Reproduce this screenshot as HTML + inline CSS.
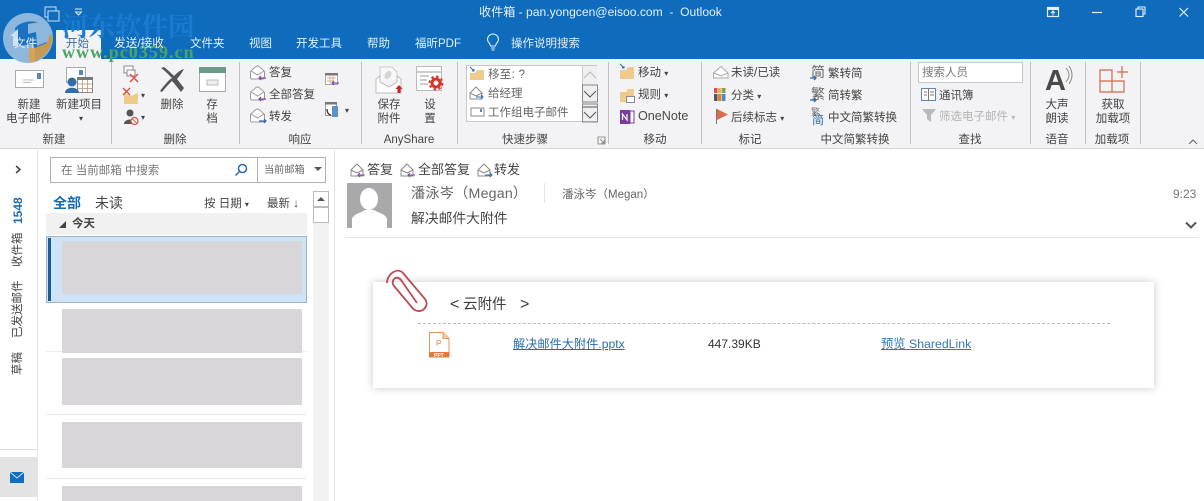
<!DOCTYPE html>
<html><head><meta charset="utf-8">
<style>
html,body{margin:0;padding:0;background:#fff}
#p{position:relative;width:1204px;height:501px;overflow:hidden;background:#fff;font-family:"Liberation Sans","Noto Sans CJK SC",sans-serif;color:#444}
.t{position:absolute;white-space:nowrap;font-size:11.500px;line-height:16px;color:#444}
.c{text-align:center;transform:translateX(-50%)}
.w{color:#e6f0fa}
.b{position:absolute}
.s{position:absolute;top:62px;height:82px;width:1px;background:#c2c2c2}
svg{position:absolute;overflow:visible}
.g{position:absolute;background:#d8d6d8}
.v{position:absolute;white-space:nowrap;font-size:11.500px;line-height:14px;color:#444;transform:rotate(-90deg);transform-origin:left top}
</style></head><body><div id="p">
<div class="b" style="left:0;top:0;width:1204px;height:59px;background:#0f6cbd"></div>
<div class="b" style="left:0;top:59px;width:1204px;height:89px;background:#f3f2f4;border-bottom:1px solid #d6d6d6"></div>
<div class="b" style="left:56px;top:30px;width:45px;height:29px;background:#f3f2f4"></div>

<!-- logo -->
<svg style="left:0;top:0" width="60" height="64"><circle cx="28" cy="38" r="25" fill="#8db7dd"/><path d="M15 28C22 20 36 19 45 26L47 44L36 50L32 44L18 46Z" fill="#1a72c0"/><path d="M10 36L18 29V46H13V36Z" fill="#cfe0f0"/><path d="M28 24L46 21L47 42L37 46L36 32L28 34Z" fill="#8db7dd"/><path d="M53 36C53 48 44 58 35 61L33 62V49L37 47L47 43L50 34Z" fill="#c69a55"/><rect x="29" y="48" width="6" height="14" fill="#d9a355"/></svg>
<div class="t" style="left:62px;top:10px;font:bold 26.500px/30px 'Noto Serif CJK SC',serif;color:#1a7bd0">河东软件园</div>
<div class="t" style="left:62px;top:43px;font:bold 18px/18px 'Liberation Serif',serif;color:#4aa564;letter-spacing:1.050px">www.pc0359.cn</div>
<svg style="left:44px;top:6px" width="16" height="16" fill="none" stroke="#cfe1f3"><rect x="1" y="1" width="11" height="10"/><rect x="4" y="5" width="11" height="10" fill="#0f6cbd"/></svg>
<svg style="left:74px;top:8px" width="10" height="10" fill="none" stroke="#dbe8f5"><path d="M1 1H8M1.500 4H7.500L4.500 7Z"/></svg>

<!-- title -->
<div class="t w" style="left:479px;top:4px;font-size:12.100px;white-space:pre">收件箱 - pan.yongcen@eisoo.com  -  Outlook</div>
<svg style="left:1046px;top:6px" width="150" height="14" fill="none" stroke="#e6f0fa"><rect x="1.500" y="1.500" width="11" height="9" stroke-width="1.200"/><path d="M1 3H13" stroke-width="2"/><path d="M7 9.500V5M5 7L7 5L9 7" stroke-width="1.100"/><path d="M46 6.500H56" stroke-width="1.200"/><rect x="90" y="3" width="7" height="7.500" stroke-width="1.100"/><path d="M92 3V1H99V8H97" stroke-width="1.100"/><path d="M133.500 2L142 10.500M142 2L133.500 10.500" stroke-width="1.200"/></svg>

<!-- tabs -->
<div class="t w" style="left:14px;top:36px">文件</div>
<div class="t" style="left:66px;top:36px;color:#3a6ea5">开始</div>
<div class="t w" style="left:114px;top:36px;font-size:11.700px">发送/接收</div>
<div class="t w" style="left:190px;top:36px">文件夹</div>
<div class="t w" style="left:249px;top:36px">视图</div>
<div class="t w" style="left:296px;top:36px">开发工具</div>
<div class="t w" style="left:367px;top:36px">帮助</div>
<div class="t w" style="left:415px;top:36px">福昕PDF</div>
<svg style="left:486px;top:34px" width="14" height="18" fill="none" stroke="#e6f0fa" stroke-width="1.100"><path d="M4.500 12C4.500 9 1.500 8.500 1.500 5.500A5.500 5.500 0 0 1 12.500 5.500C12.500 8.500 9.500 9 9.500 12ZM5 14H9M5.500 16H8.500"/></svg>
<div class="t w" style="left:511px;top:36px">操作说明搜索</div>

<!-- separators -->
<div class="s" style="left:111px"></div><div class="s" style="left:239px"></div><div class="s" style="left:361px"></div><div class="s" style="left:457px"></div><div class="s" style="left:608px"></div><div class="s" style="left:701px"></div><div class="s" style="left:910px"></div><div class="s" style="left:1030px"></div><div class="s" style="left:1085px"></div><div class="s" style="left:1140px"></div>

<!-- group labels -->
<div class="t c" style="left:54px;top:132px">新建</div>
<div class="t c" style="left:175px;top:132px">删除</div>
<div class="t c" style="left:300px;top:132px">响应</div>
<div class="t c" style="left:409px;top:132px">AnyShare</div>
<div class="t c" style="left:525px;top:132px">快速步骤</div>
<div class="t c" style="left:655px;top:132px">移动</div>
<div class="t c" style="left:750px;top:132px">标记</div>
<div class="t c" style="left:855px;top:132px">中文简繁转换</div>
<div class="t c" style="left:970px;top:132px">查找</div>
<div class="t c" style="left:1057px;top:132px">语音</div>
<div class="t c" style="left:1112px;top:132px">加载项</div>
<svg style="left:597px;top:136px" width="10" height="10" fill="none" stroke="#777"><path d="M1 1H8V8H1ZM3 3L7 7M4 7H7V4" stroke-width=".8"/></svg>
<svg style="left:1188px;top:139px" width="10" height="7" fill="none" stroke="#666"><path d="M1 5L5 1L9 5"/></svg>

<!-- new -->
<svg style="left:15px;top:70px" width="30" height="19"><rect x=".500" y=".500" width="28" height="17" fill="#fff" stroke="#aaa"/><rect x="22" y="3" width="4" height="6" fill="#5b87b8"/><path d="M8 10H19M8 12.500H16" stroke="#bbb"/></svg>
<svg style="left:64px;top:67px" width="30" height="28"><rect x="2.500" y=".500" width="19" height="15" fill="#fff" stroke="#aaa"/><rect x="15" y="3" width="4" height="5" fill="#5b87b8"/><rect x="13.500" y="10.500" width="15" height="15" fill="#fff" stroke="#888"/><rect x="13" y="10" width="16" height="3" fill="#777"/><path d="M14 17H28M14 21.500H28M18.500 13V25M23.500 13V25" stroke="#c9a58f"/><circle cx="8" cy="15" r="4.500" fill="#2e6da8"/><path d="M1 26C1 19 15 19 15 26Z" fill="#2e6da8"/></svg>
<div class="t c" style="left:29px;top:97px">新建</div>
<div class="t c" style="left:29px;top:111px">电子邮件</div>
<div class="t c" style="left:79px;top:97px">新建项目</div>
<div class="t c" style="left:81px;top:111px;font-size:8px">▾</div>

<!-- delete -->
<svg style="left:122px;top:63px" width="26" height="64"><rect x="2" y="3" width="9" height="7" fill="#fff" stroke="#888"/><rect x="5" y="7" width="8" height="6" fill="#fff" stroke="#888"/><path d="M8 11L16 19M16 11L8 19" stroke="#d9534f" stroke-width="1.500"/><path d="M2 30L9 33L16 30V41H2Z" fill="#eecb8b"/><path d="M1 25L8 32M8 25L1 32" stroke="#cf4a40" stroke-width="1.300"/><circle cx="8" cy="50" r="3.500" fill="#555"/><path d="M2 61C2 55 14 55 14 61Z" fill="#555"/><circle cx="12.500" cy="58" r="3.500" fill="#fff" stroke="#d9534f" stroke-width="1.300"/><path d="M10 55.500L15 60.500" stroke="#d9534f"/></svg>
<div class="t" style="left:141px;top:88px;font-size:8px">▾</div><div class="t" style="left:141px;top:110px;font-size:8px">▾</div>
<svg style="left:159px;top:67px" width="26" height="25"><path d="M1 24C8 15 11 12 13 11C8 6 5 3 2 1L5 0C9 3 12 6 15 9C18 6 21 3 25 2L22 7L18 12L25 21L22 25C18 20 15 16 13 14C10 17 6 21 3 25Z" fill="#555"/></svg>
<div class="t c" style="left:172px;top:97px">删除</div>
<svg style="left:199px;top:67px" width="27" height="25"><rect x=".500" y=".500" width="26" height="24" fill="#fff" stroke="#aaa"/><rect x="0" y="0" width="27" height="6" fill="#6b9b88"/><rect x="8" y="13" width="11" height="5" fill="#eee" stroke="#bbb"/></svg>
<div class="t c" style="left:212px;top:97px">存</div><div class="t c" style="left:212px;top:111px">档</div>

<!-- respond -->
<svg style="left:250px;top:65px" width="17" height="60" fill="#fff" stroke="#999"><g id="e"><path d="M.500 7Q.500 6 2 5L6 1.500Q7.500 .500 9 1.500L13 5Q14.500 6 14.500 7V12Q14.500 14 13 14H2Q.500 14 .500 12Z"/><path d="M1 6L7.500 10L14 6" fill="none"/></g><path d="M16 13H9M11 11L9 13L11 15" stroke="#7d4ba5" fill="none" stroke-width="1.200"/><g transform="translate(0 21)"><path d="M.500 7Q.500 6 2 5L6 1.500Q7.500 .500 9 1.500L13 5Q14.500 6 14.500 7V12Q14.500 14 13 14H2Q.500 14 .500 12Z"/><path d="M1 6L7.500 10L14 6" fill="none"/><path d="M16 13H9M11 11L9 13L11 15" stroke="#7d4ba5" fill="none" stroke-width="1.200"/></g><g transform="translate(0 43)"><path d="M.500 7Q.500 6 2 5L6 1.500Q7.500 .500 9 1.500L13 5Q14.500 6 14.500 7V12Q14.500 14 13 14H2Q.500 14 .500 12Z"/><path d="M1 6L7.500 10L14 6" fill="none"/><path d="M9 13H16M14 11L16 13L14 15" stroke="#2e6da8" fill="none" stroke-width="1.200"/></g></svg>
<div class="t" style="left:269px;top:65px">答复</div>
<div class="t" style="left:269px;top:87px">全部答复</div>
<div class="t" style="left:269px;top:109px">转发</div>
<svg style="left:325px;top:73px" width="15" height="14"><rect x=".500" y=".500" width="12" height="11" fill="#fff" stroke="#aaa"/><rect width="13" height="2.500" fill="#777"/><path d="M2 5H11M2 8H8M5 3V11M8 3V11" stroke="#d9b48a"/><path d="M14 10H7M9 8L7 10L9 12" stroke="#7d4ba5" fill="none" stroke-width="1.200"/></svg>
<svg style="left:325px;top:102px" width="15" height="15"><rect x=".500" y=".500" width="11" height="13" fill="#fff" stroke="#999"/><rect width="12" height="2.500" fill="#777"/><path d="M2 7C2 11 4 13 6 13" stroke="#333" fill="none" stroke-width="1.300"/><rect x="7" y="4" width="6" height="11" fill="#5b93c9"/></svg>
<div class="t" style="left:345px;top:103px;font-size:8px">▾</div>

<!-- anyshare -->
<svg style="left:375px;top:66px" width="28" height="28"><path d="M5 14V1H17L22 6V14" fill="#f8f8f8" stroke="#ccc"/><path d="M1 13L5 10V16L14 21L22 16V10L26 13V27H1Z" fill="#fff" stroke="#bbb"/><ellipse cx="13" cy="9" rx="3" ry="4.500" fill="#d5d5d5" transform="rotate(35 13 9)"/><rect x="22.500" y="22" width="3" height="5" fill="#c22"/><path d="M20.500 23L24 19L27.500 23Z" fill="#c22"/></svg>
<div class="t c" style="left:389px;top:97px">保存</div><div class="t c" style="left:389px;top:111px">附件</div>
<svg style="left:416px;top:66px" width="28" height="28"><rect x=".500" y=".500" width="25" height="24" fill="#fff" stroke="#bbb"/><path d="M1 6H25M4 10H13M4 14H11M4 18H12" stroke="#999"/><circle cx="20" cy="17" r="4" fill="#fff" stroke="#d8352a" stroke-width="3"/><circle cx="20" cy="17" r="6.500" fill="none" stroke="#d8352a" stroke-width="2" stroke-dasharray="2.500 2.600"/></svg>
<div class="t c" style="left:430px;top:97px">设</div><div class="t c" style="left:430px;top:111px">置</div>

<!-- quick steps -->
<div class="b" style="left:466px;top:65px;width:131px;height:57px;background:#fff;border:1px solid #c8c8c8;box-sizing:border-box"></div>
<div class="b" style="left:582px;top:66px;width:15px;height:55px;background:#f0eff0;border-left:1px solid #ccc;box-sizing:border-box"></div>
<svg style="left:582px;top:66px" width="16" height="56" fill="none" stroke="#555"><path d="M2 12L8 6L14 12" stroke="#bbb"/><rect x=".500" y="19" width="15" height="17" stroke="#888"/><path d="M2 25L8 31L14 25"/><rect x=".500" y="38" width="15" height="18" stroke="#888"/><path d="M1 41H15M2 46L8 52L14 46"/></svg>
<svg style="left:469px;top:66px" width="16" height="56"><path d="M1 7H6L8 4H15V14H1Z" fill="#eecb8b"/><path d="M1 1L5 5M3 5H5V3" stroke="#2e6da8" fill="none"/><path d="M1 27L7 21L13 27V33H1Z" fill="#fff" stroke="#888"/><path d="M1 27L7 30L13 27" fill="none" stroke="#888"/><path d="M7 31H14M12 29L14 31L12 33" stroke="#2e6da8" fill="none"/><rect x="2" y="42" width="13" height="8" fill="#fff" stroke="#888"/><rect x="11" y="43" width="2" height="3" fill="#5b87b8"/></svg>
<div class="t" style="left:488px;top:67px;color:#666;letter-spacing:.3px">移至: ?</div>
<div class="t" style="left:488px;top:86px;color:#666">给经理</div>
<div class="t" style="left:488px;top:105px;color:#666">工作组电子邮件</div>

<!-- move -->
<svg style="left:620px;top:64px" width="17" height="60"><path d="M0 6H6L8 3H14V15H0Z" fill="#eecb8b"/><path d="M0 0L4 4M2 4H4V2" stroke="#2e6da8" fill="none"/><path d="M0 28H6L8 25H14V38H0Z" fill="#eecb8b"/><rect x="6.500" y="32.500" width="8" height="6" fill="#fff" stroke="#888"/><rect x="0" y="46" width="10" height="14" fill="#7a3b9e"/><rect x="10" y="47" width="4" height="12" fill="#fff" stroke="#7a3b9e"/><path d="M2.500 56V50L7 56V50" stroke="#fff" fill="none" stroke-width="1.200"/></svg>
<div class="t" style="left:638px;top:65px">移动 <span style="font-size:8px">▾</span></div>
<div class="t" style="left:638px;top:87px">规则 <span style="font-size:8px">▾</span></div>
<div class="t" style="left:638px;top:108px;font-size:12.600px;color:#4a4a4a">OneNote</div>

<!-- tags -->
<svg style="left:713px;top:65px" width="17" height="60"><path d="M.500 8L8 1.500L15 8V13H.500Z" fill="#fff" stroke="#aaa"/><path d="M1 8L8 11L15 8" fill="none" stroke="#aaa"/><rect x="1" y="23" width="3.500" height="5" fill="#d9534f"/><rect x="5" y="23" width="3.500" height="5" fill="#ecb14f"/><rect x="9" y="23" width="3.500" height="5" fill="#7aa35a"/><rect x="1" y="29" width="3.500" height="7" fill="#555"/><rect x="5" y="29" width="3.500" height="7" fill="#ce8a3a"/><rect x="9" y="29" width="3.500" height="7" fill="#5b87b8"/><path d="M3.500 44V59" stroke="#777"/><path d="M4 44L15 49.500L4 55Z" fill="#de6a4c"/></svg>
<div class="t" style="left:731px;top:65px">未读/已读</div>
<div class="t" style="left:731px;top:88px">分类 <span style="font-size:8px">▾</span></div>
<div class="t" style="left:731px;top:110px">后续标志 <span style="font-size:8px">▾</span></div>

<!-- chinese -->
<div class="t" style="left:811px;top:64px;font-size:14px;color:#666">简</div>
<div class="t" style="left:811px;top:86px;font-size:14px;color:#666">繁</div>
<div class="t" style="left:811px;top:108px;font-size:9px;line-height:9px;color:#777">繁</div>
<div class="t" style="left:812px;top:112px;font-size:12px;color:#2e6da8">简</div>
<svg style="left:809px;top:73px" width="10" height="32" fill="none" stroke="#2e6da8" stroke-width="1.300"><path d="M1 5H7M5 3L7 5L5 7M1 27H7M5 25L7 27L5 29"/></svg>
<div class="t" style="left:828px;top:66px">繁转简</div>
<div class="t" style="left:828px;top:88px">简转繁</div>
<div class="t" style="left:828px;top:110px">中文简繁转换</div>

<!-- find -->
<div class="b" style="left:918px;top:62px;width:105px;height:21px;background:#fff;border:1px solid #c8c8c8;box-sizing:border-box"></div>
<div class="t" style="left:922px;top:65px;color:#777">搜索人员</div>
<svg style="left:921px;top:88px" width="16" height="14"><rect x=".500" y=".500" width="14" height="12" fill="#fff" stroke="#5b87b8"/><path d="M7.500 1V13M3 4H6M3 7H6M9 4H13M9 7H13" stroke="#777"/></svg>
<div class="t" style="left:939px;top:88px">通讯簿</div>
<svg style="left:922px;top:109px" width="14" height="13"><path d="M0 0H14L9 6V13L5 10V6Z" fill="#b8b8b8"/></svg>
<div class="t" style="left:939px;top:109px;color:#b5b5b5">筛选电子邮件 <span style="font-size:8px">▾</span></div>

<!-- voice -->
<div class="t" style="left:1045px;top:68px;font-size:29px;line-height:27px;color:#4a4a4a;font-weight:bold">A</div>
<svg style="left:1064px;top:65px" width="9" height="20" fill="none" stroke="#888"><path d="M2 3C6 8 6 12 2 17M5 1C9 7 9 13 5 19"/></svg>
<div class="t c" style="left:1057px;top:97px">大声</div><div class="t c" style="left:1057px;top:111px">朗读</div>

<!-- addins -->
<svg style="left:1099px;top:65px" width="30" height="29" fill="none" stroke="#d2694a" stroke-width="1.200"><path d="M1 5H13V27H1ZM1 16H25V27H13M18 7H29M23 1V13"/></svg>
<div class="t c" style="left:1113px;top:97px">获取</div><div class="t c" style="left:1113px;top:111px">加载项</div>

<!-- left rail -->
<div class="b" style="left:37px;top:150px;width:1px;height:351px;background:#e5e5e5"></div>
<svg style="left:14px;top:165px" width="8" height="9" fill="none" stroke="#444" stroke-width="1.500"><path d="M2 1L6 4.500L2 8"/></svg>
<div class="v" style="left:11px;top:224px;color:#1f6cb0;font-weight:bold;font-size:12px">1548</div>
<div class="v" style="left:11px;top:267px;">收件箱</div>
<div class="v" style="left:11px;top:338px">已发送邮件</div>
<div class="v" style="left:11px;top:375px">草稿</div>
<div class="b" style="left:0;top:449px;width:37px;height:1px;background:#ddd"></div>
<div class="b" style="left:0;top:457px;width:37px;height:40px;background:#e3e3e3"></div>
<svg style="left:10px;top:472px" width="14" height="11"><rect width="14" height="11" fill="#106ebe"/><path d="M0 0L7 6L14 0" fill="none" stroke="#e3e3e3"/></svg>

<!-- search -->
<div class="b" style="left:50px;top:157px;width:276px;height:26px;border:1px solid #aeb0b3;box-sizing:border-box"></div>
<div class="b" style="left:257px;top:158px;width:1px;height:24px;background:#aeb0b3"></div>
<div class="t" style="left:61px;top:163px;color:#777">在 当前邮箱 中搜索</div>
<svg style="left:234px;top:163px" width="14" height="14" fill="none" stroke="#2a6aa8" stroke-width="1.500"><circle cx="8.500" cy="5.500" r="4"/><path d="M5.500 8.500L1.500 12.500"/></svg>
<div class="t" style="left:264px;top:163px;font-size:10.200px;color:#666">当前邮箱</div>
<svg style="left:314px;top:167px" width="8" height="5"><path d="M0 0H8L4 4Z" fill="#555"/></svg>

<!-- list header -->
<div class="t" style="left:53px;top:195px;font-size:14px;line-height:16px;color:#106ebe;font-weight:bold">全部</div>
<div class="t" style="left:95px;top:195px;font-size:14px;line-height:16px">未读</div>
<div class="t" style="left:204px;top:196px;">按 日期 <span style="font-size:8px">▾</span></div>
<div class="t" style="left:267px;top:196px">最新 ↓</div>
<div class="b" style="left:46px;top:213px;width:261px;height:22px;background:#f2f1f2"></div>
<svg style="left:59px;top:221px" width="7" height="7"><path d="M7 0V7H0Z" fill="#444"/></svg>
<div class="t" style="left:72px;top:216px;font-weight:bold;color:#444">今天</div>

<!-- list -->
<div class="b" style="left:46px;top:236px;width:261px;height:67px;background:#cde4f7;border:1px solid #9fb4c6;box-sizing:border-box"></div>
<div class="b" style="left:48px;top:238px;width:3px;height:63px;background:#1a5a96"></div>
<div class="g" style="left:62px;top:241px;width:240px;height:53px"></div>
<div class="b" style="left:46px;top:351px;width:261px;height:1px;background:#eee"></div>
<div class="g" style="left:62px;top:309px;width:240px;height:44px"></div>
<div class="g" style="left:62px;top:358px;width:240px;height:47px"></div>
<div class="b" style="left:46px;top:414px;width:261px;height:1px;background:#e8e8e8"></div>
<div class="g" style="left:62px;top:422px;width:240px;height:46px"></div>
<div class="b" style="left:46px;top:478px;width:261px;height:1px;background:#e8e8e8"></div>
<div class="g" style="left:62px;top:486px;width:240px;height:15px"></div>

<!-- scrollbar -->
<div class="b" style="left:313px;top:191px;width:16px;height:310px;background:#f3f2f3"></div>
<div class="b" style="left:313px;top:191px;width:16px;height:16px;background:#fff;border:1px solid #bbb;box-sizing:border-box"></div>
<svg style="left:317px;top:197px" width="8" height="5"><path d="M0 4H8L4 0Z" fill="#555"/></svg>
<div class="b" style="left:313px;top:207px;width:16px;height:16px;background:#fff;border:1px solid #bbb;box-sizing:border-box"></div>
<div class="b" style="left:334px;top:150px;width:1px;height:351px;background:#e5e5e5"></div>

<!-- reading header -->
<svg style="left:350px;top:163px" width="150" height="15" fill="#fff" stroke="#888"><path d="M1 7L7 1L13 7V13H1Z"/><path d="M1 7L7 10L13 7" fill="none"/><path d="M15 12H8M10 10L8 12L10 14" stroke="#7d4ba5" fill="none"/><path d="M51 7L57 1L63 7V13H51Z"/><path d="M51 7L57 10L63 7" fill="none"/><path d="M65 12H58M60 10L58 12L60 14" stroke="#7d4ba5" fill="none"/><path d="M128 7L134 1L140 7V13H128Z"/><path d="M128 7L134 10L140 7" fill="none"/><path d="M135 12H142M140 10L142 12L140 14" stroke="#2e6da8" fill="none"/></svg>
<div class="t" style="left:367px;top:162px;font-size:13px;line-height:16px">答复</div>
<div class="t" style="left:418px;top:162px;font-size:13px;line-height:16px">全部答复</div>
<div class="t" style="left:494px;top:162px;font-size:13px;line-height:16px">转发</div>
<div class="b" style="left:347px;top:183px;width:45px;height:45px;background:#a9a9ac;overflow:hidden"><svg style="left:0;top:0" width="45" height="45"><ellipse cx="22" cy="16" rx="9" ry="11" fill="#fff"/><path d="M5 45V37C5 31 14 30 18 27H27C31 30 40 31 40 37V45Z" fill="#fff"/></svg></div>
<div class="t" style="left:411px;top:185px;font-size:14.200px;line-height:18px;color:#666;letter-spacing:.2px">潘泳岑（Megan）</div>
<div class="b" style="left:544px;top:183px;width:1px;height:20px;background:#e6e6e6"></div>
<div class="t" style="left:562px;top:187px;color:#666;">潘泳岑（Megan）</div>
<div class="t" style="left:411px;top:210px;font-size:13.800px;line-height:18px;color:#444">解决邮件大附件</div>
<div class="t" style="left:1173px;top:186px;color:#777;font-size:12px">9:23</div>
<svg style="left:1185px;top:221px" width="12" height="9" fill="none" stroke="#555" stroke-width="2"><path d="M1 1.500L6 6.500L11 1.500"/></svg>
<div class="b" style="left:346px;top:237px;width:852px;height:1px;background:#e6e6e6"></div>

<!-- attachment card -->
<div class="b" style="left:373px;top:282px;width:781px;height:106px;background:#fff;box-shadow:0 0 8px rgba(0,0,0,.22)"></div>
<svg style="left:384px;top:268px" width="46" height="46" fill="none" stroke="#bf4853" stroke-width="1.800"><path d="M3 15C3 6 13 -1 19 5L41 31C46 38 38 46 31 42C29 41 28 40 26 37L10 18C6 13 12 6 17 12L33 35"/></svg>
<div class="t" style="left:450px;top:296px;font-size:14.500px;line-height:18px;color:#3d3d3d;white-space:pre"><span style="font-size:16px">&lt;</span><span style="position:absolute;left:13px">云附件</span><span style="position:absolute;left:70px;font-size:16px">&gt;</span></div>
<div class="b" style="left:418px;top:323px;width:692px;height:0;border-top:1px dashed #bbb"></div>
<svg style="left:429px;top:332px" width="21" height="26"><path d="M.500 .500H14L20 6.500V25H.500Z" fill="#fff" stroke="#e8935a"/><path d="M14 .500V6.500H20" fill="#f3c9a8" stroke="#e8935a"/><rect y="20" width="20.500" height="5.500" fill="#e07b3c"/><text x="7" y="14" font-size="8" fill="#eaa77a" font-family="Liberation Sans" font-weight="bold">P</text><text x="5" y="25" font-size="5" fill="#fff" font-family="Liberation Sans" font-weight="bold">PPT</text></svg>
<div class="t" style="left:513px;top:336px;color:#2a6ca8;text-decoration:underline;font-size:12.200px">解决邮件大附件.pptx</div>
<div class="t" style="left:708px;top:336px;color:#333;font-size:12px">447.39KB</div>
<div class="t" style="left:881px;top:336px;color:#3577b5;text-decoration:underline;font-size:12.300px">预览 SharedLink</div>
</div></body></html>
